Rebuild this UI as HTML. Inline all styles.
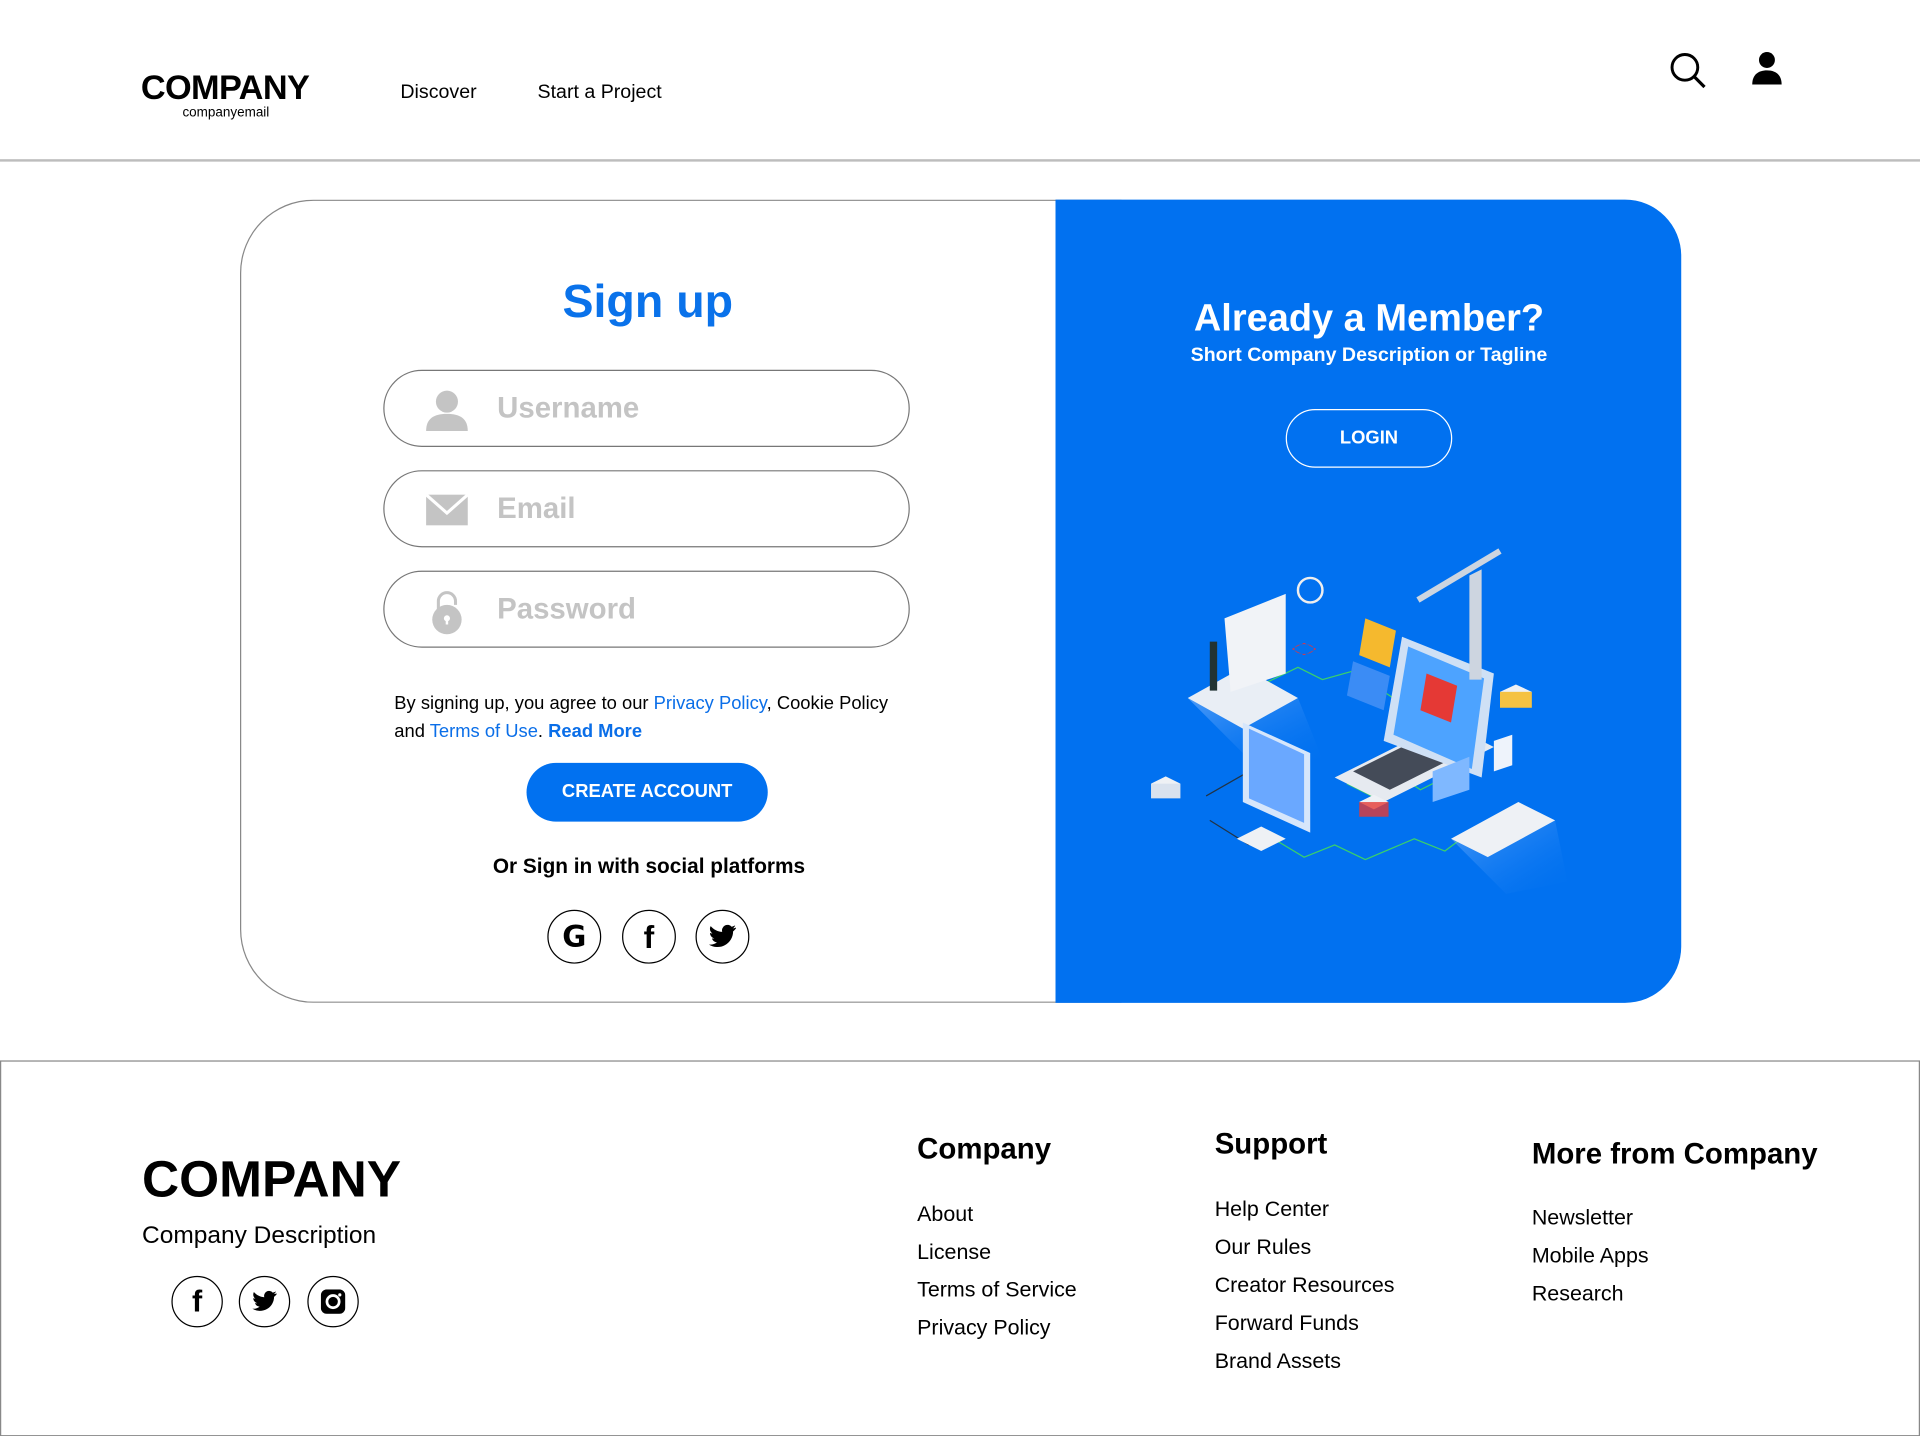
<!DOCTYPE html>
<html><head><meta charset="utf-8">
<style>
html,body{margin:0;padding:0;width:1920px;height:1436px;overflow:hidden;background:#fff;}
#w{position:absolute;left:0;top:0;width:1568px;height:1173px;transform:scale(1.22449);transform-origin:0 0;font-family:"Liberation Sans",sans-serif;color:#000;}
.a{position:absolute;white-space:nowrap;}
.inp{position:absolute;left:313px;width:430px;height:63px;border:1px solid #777;border-radius:32px;box-sizing:border-box;}
.inp span{position:absolute;left:92px;top:17px;font-size:24px;font-weight:bold;color:#c4c4c4;}
.inp svg{position:absolute;left:32px;top:14px;}
.soc{position:absolute;width:44px;height:44px;border:1.6px solid #000;border-radius:50%;box-sizing:border-box;display:flex;align-items:center;justify-content:center;}
.fl{font-size:17.5px;}
</style></head><body><div id="w">
<!-- header -->
<div class="a" style="left:115px;top:56px;font-size:28px;font-weight:bold;letter-spacing:-0.5px">COMPANY</div>
<div class="a" style="left:149px;top:86px;font-size:11px">companyemail</div>
<div class="a" style="left:327px;top:67px;font-size:16px">Discover</div>
<div class="a" style="left:439px;top:67px;font-size:16px">Start a Project</div>
<svg class="a" style="left:1363px;top:42px" width="32" height="32" viewBox="0 0 32 32"><circle cx="13" cy="13" r="10.5" fill="none" stroke="#000" stroke-width="2.4"/><line x1="20.5" y1="20.5" x2="29" y2="29" stroke="#000" stroke-width="2.6"/></svg>
<svg class="a" style="left:1430px;top:42px" width="26" height="28" viewBox="0 0 26 28"><circle cx="13" cy="7" r="6.5"/><path d="M1 27 C1 19 6 15.5 13 15.5 C20 15.5 25 19 25 27Z"/></svg>
<div class="a" style="left:0;top:130px;width:1568px;height:2px;background:#bdbdbd"></div>

<!-- card -->
<div class="a" style="left:196px;top:163px;width:720px;height:656px;border:1px solid #888;border-radius:60px 0 0 60px;box-sizing:border-box;border-right:none"></div>
<div class="a" style="left:862px;top:163px;width:511px;height:656px;background:#0171f0;border-radius:0 46px 46px 0"></div>

<div class="a" style="left:429px;top:226px;width:200px;text-align:center;font-size:38px;font-weight:bold;color:#0a72ea">Sign up</div>
<div class="inp" style="top:302px"><svg width="38" height="36" viewBox="0 0 38 36"><circle cx="19" cy="11" r="9" fill="#c4c4c4"/><path d="M2 35 C2 25 8 21 19 21 C30 21 36 25 36 35Z" fill="#c4c4c4"/></svg><span>Username</span></div>
<div class="inp" style="top:384px"><svg width="38" height="36" viewBox="0 0 38 36"><rect x="2" y="5" width="34" height="25" fill="#c4c4c4"/><path d="M2 5 L19 20 L36 5" fill="none" stroke="#fff" stroke-width="2.5"/></svg><span>Email</span></div>
<div class="inp" style="top:466px"><svg width="38" height="38" viewBox="0 0 38 38"><path d="M12 18 V10 a7 7 0 0 1 14 0 V13" fill="none" stroke="#c4c4c4" stroke-width="2.5"/><circle cx="19" cy="25" r="12" fill="#c4c4c4"/><circle cx="19" cy="24" r="2.5" fill="#fff"/><rect x="18" y="24" width="2" height="5" fill="#fff"/></svg><span>Password</span></div>

<div class="a" style="left:322px;top:563px;font-size:15px;line-height:23px">By signing up, you agree to our <span style="color:#0a6ee8">Privacy Policy</span>, Cookie Policy<br>and <span style="color:#0a6ee8">Terms of Use</span>. <b style="color:#0a6ee8">Read More</b></div>
<div class="a" style="left:430px;top:623px;width:197px;height:48px;border-radius:24px;background:#0171f0;color:#fff;font-weight:bold;font-size:15px;text-align:center;line-height:48px">CREATE ACCOUNT</div>
<div class="a" style="left:330px;top:698px;width:400px;text-align:center;font-size:17px;font-weight:bold">Or Sign in with social platforms</div>
<div class="soc" style="left:447px;top:743px"><span style="font-weight:900;font-size:24px;font-family:'DejaVu Sans',sans-serif">G</span></div>
<div class="soc" style="left:508px;top:743px"><span style="font-weight:900;font-size:26px">f</span></div>
<div class="soc" style="left:568px;top:743px"><svg width="24" height="20" viewBox="0 0 24 20"><path d="M23 2.5c-.8.4-1.7.6-2.6.7.9-.6 1.6-1.4 2-2.5-.9.5-1.9.9-2.9 1.1A4.5 4.5 0 0 0 11.8 6C8 5.8 4.7 4 2.4 1.3c-1.2 2.1-.6 4.7 1.4 6-.7 0-1.4-.2-2-.5 0 2.2 1.6 4 3.6 4.5-.7.2-1.4.2-2 .1.6 1.8 2.3 3.1 4.2 3.1A9 9 0 0 1 1 16.4 12.8 12.8 0 0 0 20.7 5.6c.9-.6 1.6-1.4 2.3-2.3z"/></svg></div>

<div class="a" style="left:900px;top:242px;width:436px;text-align:center;font-size:31px;font-weight:bold;color:#fff">Already a Member?</div>
<div class="a" style="left:900px;top:282px;width:436px;text-align:center;font-size:16px;font-weight:bold;color:#fff">Short Company Description or Tagline</div>
<div class="a" style="left:1050px;top:334px;width:136px;height:48px;border:1px solid #fff;border-radius:25px;box-sizing:border-box;color:#fff;font-weight:bold;font-size:15px;text-align:center;line-height:46px">LOGIN</div>

<!-- illustration -->
<svg class="a" style="left:930px;top:440px" width="360" height="295" viewBox="0 0 360 295">
<defs><linearGradient id="sh" x1="0" y1="0" x2="1" y2="1"><stop offset="0" stop-color="#9fc8ff" stop-opacity=".8"/><stop offset="1" stop-color="#0171f0" stop-opacity="0"/></linearGradient></defs>
<g fill="none" stroke="#3ad16a" stroke-width="1"><path d="M105 117 L130 105 L150 115 L175 108 L230 145"/><path d="M110 245 L135 260 L160 250 L185 262 L225 245 L250 255 L270 240"/><path d="M170 200 L190 210 L215 195 L230 205 L260 190"/></g>
<g fill="none" stroke="#234" stroke-width="1"><path d="M55 210 L90 190 L110 200 M58 230 L90 250"/></g>
<path d="M40 130 L85 155 L130 130 L85 105Z" fill="#e9eef5"/><path d="M40 130 L85 155 L130 130 L150 180 L95 185Z" fill="url(#sh)" opacity=".6"/>
<path d="M70 65 L120 45 L120 110 L75 125Z" fill="#f1f3f7"/>
<rect x="58" y="84" width="6" height="40" fill="#233"/>
<path d="M125 90 l10 -5 l10 5 l-10 5z M127 90 a8 4 0 1 0 16 0 a8 4 0 1 0 -16 0" fill="#e8333b"/>
<circle cx="140" cy="42" r="10" fill="none" stroke="#eee" stroke-width="2"/>
<path d="M160 195 L250 150 L290 170 L200 215Z" fill="#e6eaf0"/><path d="M175 190 L245 155 L275 170 L205 205Z" fill="#444b58"/>
<path d="M200 165 L215 80 L290 110 L280 195Z" fill="#cfe0f5"/><path d="M208 160 L220 88 L282 114 L272 188Z" fill="#4da3ff"/>
<path d="M185 65 L210 75 L205 105 L180 95Z" fill="#f5b92e"/>
<path d="M235 110 L260 120 L255 150 L230 140Z" fill="#e53935"/>
<path d="M175 100 L205 112 L200 140 L170 128Z" fill="#3b8cf5"/>
<path d="M270 30 L280 25 L280 115 L270 115Z" fill="#cdd5e0"/><path d="M228 50 L295 10" stroke="#cdd5e0" stroke-width="5"/>
<path d="M85 150 L140 175 L140 240 L85 215Z" fill="#d6e6fb"/><path d="M90 155 L135 176 L135 232 L90 212Z" fill="#6aa8ff"/>
<path d="M80 245 L100 235 L120 245 L100 255Z" fill="#eef1f5"/>
<path d="M10 200 L22 194 L34 200 L22 206Z" fill="#eef1f5"/><rect x="10" y="200" width="24" height="12" fill="#d9e2ee"/>
<path d="M180 215 L192 209 L204 215 L192 221Z" fill="#eef1f5"/><rect x="180" y="215" width="24" height="12" fill="#e53935" opacity=".8"/>
<path d="M295 125 L308 119 L321 125 L308 131Z" fill="#eef1f5"/><rect x="295" y="125" width="26" height="13" fill="#f5c242"/>
<path d="M255 245 L310 215 L340 230 L285 260Z" fill="#eef1f5"/><path d="M255 245 L285 260 L340 230 L350 280 L300 290Z" fill="url(#sh)" opacity=".6"/>
<path d="M290 165 L305 160 L305 185 L290 190Z" fill="#eef3fb"/>
<path d="M240 190 L270 178 L270 205 L240 215Z" fill="#7fb8ff"/>
</svg>

<!-- footer -->
<div class="a" style="left:0;top:866px;width:1568px;height:307px;border:1px solid #888;box-sizing:border-box"></div>
<div class="a" style="left:116px;top:939px;font-size:42px;font-weight:bold">COMPANY</div>
<div class="a" style="left:116px;top:998px;font-size:20px">Company Description</div>
<div class="soc" style="left:140px;top:1042px;width:42px;height:42px"><span style="font-weight:900;font-size:25px">f</span></div>
<div class="soc" style="left:195px;top:1042px;width:42px;height:42px"><svg width="22" height="18" viewBox="0 0 24 20"><path d="M23 2.5c-.8.4-1.7.6-2.6.7.9-.6 1.6-1.4 2-2.5-.9.5-1.9.9-2.9 1.1A4.5 4.5 0 0 0 11.8 6C8 5.8 4.7 4 2.4 1.3c-1.2 2.1-.6 4.7 1.4 6-.7 0-1.4-.2-2-.5 0 2.2 1.6 4 3.6 4.5-.7.2-1.4.2-2 .1.6 1.8 2.3 3.1 4.2 3.1A9 9 0 0 1 1 16.4 12.8 12.8 0 0 0 20.7 5.6c.9-.6 1.6-1.4 2.3-2.3z"/></svg></div>
<div class="soc" style="left:251px;top:1042px;width:42px;height:42px"><svg width="20" height="20" viewBox="0 0 20 20"><rect x="0" y="0" width="20" height="20" rx="5"/><circle cx="10" cy="10" r="5" fill="none" stroke="#fff" stroke-width="2.2"/><circle cx="15.5" cy="4.5" r="1.3" fill="#fff"/></svg></div>

<div class="a" style="left:749px;top:925px;font-size:24px;font-weight:bold">Company</div>
<div class="a fl" style="left:749px;top:981px">About</div>
<div class="a fl" style="left:749px;top:1012px">License</div>
<div class="a fl" style="left:749px;top:1043px">Terms of Service</div>
<div class="a fl" style="left:749px;top:1074px">Privacy Policy</div>

<div class="a" style="left:992px;top:921px;font-size:24px;font-weight:bold">Support</div>
<div class="a fl" style="left:992px;top:977px">Help Center</div>
<div class="a fl" style="left:992px;top:1008px">Our Rules</div>
<div class="a fl" style="left:992px;top:1039px">Creator Resources</div>
<div class="a fl" style="left:992px;top:1070px">Forward Funds</div>
<div class="a fl" style="left:992px;top:1101px">Brand Assets</div>

<div class="a" style="left:1251px;top:929px;font-size:24px;font-weight:bold">More from Company</div>
<div class="a fl" style="left:1251px;top:984px">Newsletter</div>
<div class="a fl" style="left:1251px;top:1015px">Mobile Apps</div>
<div class="a fl" style="left:1251px;top:1046px">Research</div>
</div></body></html>
